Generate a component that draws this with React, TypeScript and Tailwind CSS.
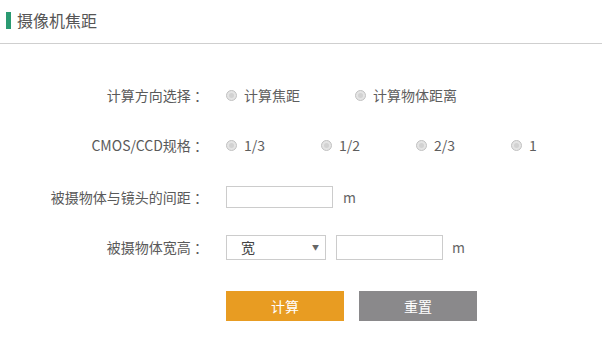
const font = { fontFamily: '"Noto Sans CJK SC", "Noto Sans", sans-serif' };

const Radio = ({ label, width }: { label: string; width: string }) => (
	<label className={`flex items-center gap-[7px] ${width}`}>
		<span className="flex h-[11px] w-[11px] items-center justify-center rounded-full border border-[#c2c2c2] bg-[#e4e4e4]">
			<span className="h-[5px] w-[5px] rounded-full bg-[#d2d2d2]" />
		</span>
		<span className="text-[14px] text-[#5e5e5e]">{label}</span>
	</label>
);

const Row = ({ label, className, children }: { label: string; className?: string; children: React.ReactNode }) => (
	<div className={`flex h-[26px] items-center ${className ?? ''}`}>
		<div className="w-[226px] shrink-0 pr-[18px] text-right text-[14px] text-[#5a5a5a]">{label}</div>
		<div className="flex items-center">{children}</div>
	</div>
);

export default function App() {
	return (
		<div className="h-[343px] w-[602px] overflow-hidden bg-white" style={font}>
			<div className="flex h-[44px] items-center border-b border-[#cfcfcf] pb-[3px]">
				<span className="ml-[6px] h-[17px] w-[5px] bg-[#2a9a72]" />
				<h1 className="ml-[6px] text-[16px] text-[#555]">摄像机焦距</h1>
			</div>
			<form className="flex flex-col pt-[38px]">
				<Row label="计算方向选择 ：">
					<Radio label="计算焦距" width="w-[129px]" />
					<Radio label="计算物体距离" width="w-[129px]" />
				</Row>
				<Row label="CMOS/CCD规格 ：" className="mt-[24px]">
					<Radio label="1/3" width="w-[95px]" />
					<Radio label="1/2" width="w-[95px]" />
					<Radio label="2/3" width="w-[95px]" />
					<Radio label="1" width="w-[40px]" />
				</Row>
				<Row label="被摄物体与镜头的间距 ：" className="mt-[26px]">
					<input className="h-[22px] w-[107px] border border-[#cccccc] outline-none" />
					<span className="ml-[10px] text-[14px] text-[#666]">m</span>
				</Row>
				<Row label="被摄物体宽高 ：" className="mt-[24px]">
					<div className="flex h-[25px] w-[100px] items-center justify-between border border-[#cccccc] pl-[14px] pr-[6px]">
						<span className="text-[14px] text-[#444]">宽</span>
						<span className="text-[7px] text-[#666]">▼</span>
					</div>
					<input className="ml-[10px] h-[25px] w-[107px] border border-[#cccccc] outline-none" />
					<span className="ml-[9px] text-[14px] text-[#666]">m</span>
				</Row>
				<div className="mt-[31px] flex gap-[15px] pl-[226px]">
					<button type="button" className="h-[30px] w-[118px] bg-[#e89c22] text-[14px] text-white">计算</button>
					<button type="button" className="h-[30px] w-[118px] bg-[#8a898b] text-[14px] text-white">重置</button>
				</div>
			</form>
		</div>
	);
}
